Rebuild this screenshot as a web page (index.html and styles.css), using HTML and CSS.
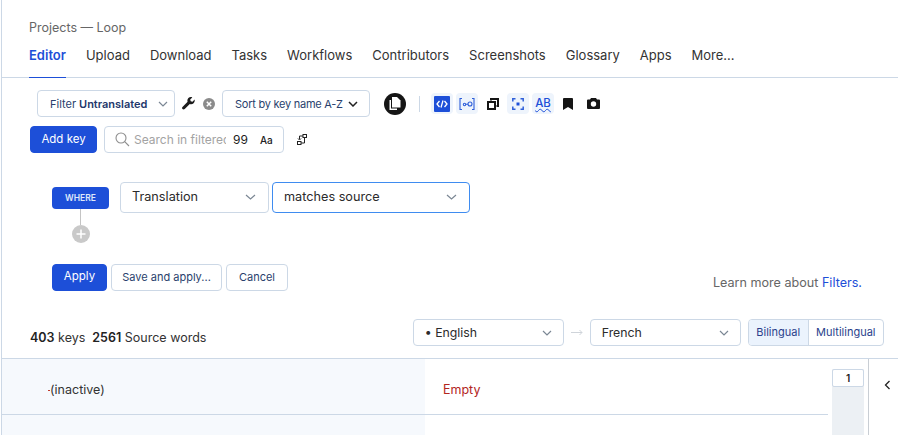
FILE: index.html
```html
<!DOCTYPE html>
<html lang="en">
<head>
  <meta charset="UTF-8" />
  <title>Editor</title>
  <link rel="stylesheet" href="styles.css">
</head>
<body>
  <div class="page">
    <div class="crumbs">Projects — Loop</div>
    <nav class="tabs">
      <a class="tab active">Editor</a>
      <a class="tab">Upload</a>
      <a class="tab">Download</a>
      <a class="tab">Tasks</a>
      <a class="tab">Workflows</a>
      <a class="tab">Contributors</a>
      <a class="tab">Screenshots</a>
      <a class="tab">Glossary</a>
      <a class="tab">Apps</a>
      <a class="tab">More...</a>
    </nav>

    <div class="toolbar">
      <button class="btn btn-filter">Filter <strong>Untranslated</strong>
        <svg class="chev" width="10" height="6" viewBox="0 0 10 6"><path d="M1 1l4 4 4-4"/></svg>
      </button>
      <svg class="wrench" width="13" height="13" viewBox="0 0 13 13"><path d="M12.6 2.6L10.5 4.700 8.700 4.200 8.200 2.400 10.300.4C8.900-.2 7.400.1 6.400 1.100 5.400 2.100 5.100 3.500 5.600 4.800L.5 9.900c-.6.6-.6 1.600 0 2.200.6.6 1.600.6 2.200 0l5.100-5.100c1.300.5 2.800.2 3.800-.8 1-1 1.300-2.400 1-3.600z"/></svg>
      <svg class="clear" width="12" height="12" viewBox="0 0 12 12"><circle cx="6" cy="6" r="6"/><path d="M3.800 3.800l4.400 4.400M8.200 3.800l-4.400 4.400"/></svg>
      <button class="btn btn-sort"><span class="sort-label">Sort by key name A-Z</span>
        <svg class="chev dark" width="10" height="6" viewBox="0 0 10 6"><path d="M1 1l4 4 4-4"/></svg>
      </button>
      <svg class="logo" width="22" height="22" viewBox="0 0 22 22"><circle cx="11" cy="11" r="11"/><path class="sheet" d="M5.500 7H7v8.500h6V17H5.500z"/><path class="sheet" d="M8 4h5l3.500 3.500V14.500H8z"/></svg>
      <span class="divider"></span>
      <div class="icons">
        <span class="ico tint"><svg width="16" height="16" viewBox="0 0 16 16"><rect class="solid" width="16" height="16" rx="1"/><path class="rev" d="M5.500 5L3 8l2.500 3M10.500 5L13 8l-2.500 3M9 4.500l-2 7"/></svg></span>
        <span class="ico tint"><svg width="16" height="14" viewBox="0 0 16 14"><path class="line" d="M3 1.500H1v11h2M13 1.500h2v11h-2"/><circle class="line" cx="11" cy="7" r="2"/><circle class="line" cx="5.500" cy="7.500" r="1.200"/><path class="line" d="M7 7.300h2"/></svg></span>
        <span class="ico wide"><svg width="12" height="12" viewBox="0 0 12 12"><path class="black" d="M3 0H12v9H9.500V7h.5V2H5v.5H3z"/><path class="black" d="M0 3h9v9H0zM2 5v5h5V5z" fill-rule="evenodd"/></svg></span>
        <span class="ico tint"><svg width="12" height="12" viewBox="0 0 12 12"><path class="line thick" d="M.8 3.500V.8h2.700M8.500.8h2.700v2.700M.8 8.500v2.700h2.700M8.500 11.200h2.700V8.500"/><rect class="solid" x="4.500" y="4.500" width="3" height="3"/></svg></span>
        <span class="ico tint"><span class="ab">AB</span></span>
        <span class="ico"><svg width="10" height="12" viewBox="0 0 10 12"><path class="black" d="M1 0h8a1 1 0 011 1v11L5 9l-5 3V1a1 1 0 011-1z"/></svg></span>
        <span class="ico"><svg width="13" height="11" viewBox="0 0 13 11"><path class="black" fill-rule="evenodd" d="M4 0h5l1 1.500h2a1 1 0 011 1V10a1 1 0 01-1 1H1a1 1 0 01-1-1V2.500a1 1 0 011-1h2zM6.500 3.300a2.700 2.700 0 100 5.400 2.700 2.700 0 000-5.400z"/></svg></span>
      </div>
    </div>

    <div class="toolbar second">
      <button class="btn btn-primary btn-add">Add key</button>
      <div class="search">
        <svg class="lens" width="15" height="15" viewBox="0 0 15 15"><circle cx="6" cy="6" r="5"/><path d="M9.700 9.700L14 14"/></svg>
        <input class="search-text" type="text" placeholder="Search in filtered keys">
        <span class="opt">99</span>
        <span class="opt small">Aa</span>
      </div>
      <svg class="grid-ico" width="10" height="11" viewBox="0 0 10 11"><rect x="6" y=".5" width="3.500" height="3"/><rect x=".5" y="7.500" width="3.500" height="3"/><path d="M6 2H2.500v3M1 4.500l1.500 1.500L4 4.500M7.500 4v5H4"/></svg>
    </div>

    <div class="where">
      <div class="where-left">
        <span class="where-tag">WHERE</span>
        <span class="where-line"></span>
        <svg class="plus" width="18" height="18" viewBox="0 0 18 18"><circle cx="9" cy="9" r="9"/><path d="M9 4.500v9M4.500 9h9"/></svg>
      </div>
      <div class="select field-a">Translation
        <svg class="chev" width="11" height="6" viewBox="0 0 11 6"><path d="M1 1l4.500 4L10 1"/></svg>
      </div>
      <div class="select field-b">matches source
        <svg class="chev" width="11" height="6" viewBox="0 0 11 6"><path d="M1 1l4.500 4L10 1"/></svg>
      </div>
    </div>

    <div class="actions">
      <button class="btn btn-primary btn-apply">Apply</button>
      <button class="btn btn-save">Save and apply...</button>
      <button class="btn btn-cancel">Cancel</button>
      <span class="learn">Learn more about <a>Filters.</a></span>
    </div>

    <div class="stats">
      <span class="counts"><b>403</b> keys&nbsp; <b>2561</b> Source words</span>
      <div class="lang-pick">
        <div class="select lang">• English
          <svg class="chev" width="10" height="6" viewBox="0 0 10 6"><path d="M1 1l4 4 4-4"/></svg>
        </div>
        <svg class="arrow" width="12" height="7" viewBox="0 0 12 7"><path d="M0 3.500h11M8.500 1l2.500 2.500L8.500 6"/></svg>
        <div class="select lang">French
          <svg class="chev" width="10" height="6" viewBox="0 0 10 6"><path d="M1 1l4 4 4-4"/></svg>
        </div>
        <div class="mode">
          <span class="mode-item on">Bilingual</span>
          <span class="mode-item">Multilingual</span>
        </div>
      </div>
    </div>

    <div class="table">
      <div class="rows">
        <div class="row">
          <div class="cell source"><i class="dot"></i>(inactive)</div>
          <div class="cell target">Empty</div>
        </div>
        <div class="row">
          <div class="cell source"></div>
          <div class="cell target"></div>
        </div>
      </div>
      <div class="pager"><span class="page-num">1</span></div>
      <div class="side">
        <svg width="7" height="10" viewBox="0 0 7 10"><path d="M5.500 1L1.500 5l4 4"/></svg>
      </div>
    </div>
  </div>
</body>
</html>
```

FILE: styles.css
```css
* {
  box-sizing: border-box;
}

html, body {
  margin: 0;
  height: 100%;
  overflow: hidden;
}

body {
  background: #fff;
  color: #2b2b2b;
  font-family: 'Inter', sans-serif;
  font-size: 13px;
}

button {
  font-family: inherit;
}

svg {
  display: block;
  flex: none;
}

.page {
  margin-left: 1px;
  width: 897px;
  height: 435px;
  border-left: 1px solid #ccd8e6;
  overflow: hidden;
}

.crumbs {
  padding: 20px 0 0 27px;
  height: 38px;
  font-size: 12.5px;
  line-height: 16px;
  color: #666;
}

.tabs {
  display: flex;
  gap: 20px;
  height: 40px;
  padding-left: 27px;
  border-bottom: 1px solid #ccd8e6;
}

.tab {
  height: 40px;
  padding-top: 8px;
  line-height: 18px;
  font-size: 13px;
  color: #333;
}

.tab.active {
  color: #1d4fd8;
  font-weight: 600;
  border-bottom: 1px solid #1d4fd8;
}

.toolbar {
  display: flex;
  align-items: center;
  height: 27px;
  margin-top: 12px;
  padding-left: 35px;
}

.toolbar.second {
  margin-top: 9px;
  padding-left: 28px;
}

.btn {
  height: 27px;
  padding: 0;
  background: #fff;
  border: 1px solid #ccd8e6;
  border-radius: 4px;
  font-size: 11px;
  white-space: nowrap;
  color: #2a3f6d;
}

.btn-primary {
  background: #1d4fd8;
  border-color: #1d4fd8;
  color: #fff;
  font-size: 11.5px;
  font-weight: 400;
}

.btn-filter {
  display: flex;
  align-items: center;
  width: 138px;
  padding-left: 12px;
  gap: 3px;
}

.btn-filter strong {
  font-weight: 600;
  color: #22376b;
}

.btn-filter .chev {
  margin-left: 8px;
}

.chev path {
  fill: none;
  stroke: #7b8794;
  stroke-width: 1.2;
}

.chev.dark path {
  stroke: #222;
  stroke-width: 1.5;
}

.wrench {
  margin-left: 7px;
}

.wrench path {
  fill: #1c1c1c;
}

.clear {
  margin-left: 8px;
}

.clear circle {
  fill: #8b8b8b;
}

.clear path {
  stroke: #fff;
  stroke-width: 1.5;
}

.btn-sort {
  display: flex;
  align-items: center;
  justify-content: space-between;
  width: 148px;
  margin-left: 7px;
  padding: 0 11px 0 12px;
}

.sort-label {
  letter-spacing: -0.25px;
}

.logo {
  margin-left: 14px;
}

.logo circle {
  fill: #151515;
}

.logo .sheet {
  fill: #fff;
}

.divider {
  width: 1px;
  height: 16px;
  margin: 0 11px 0 13px;
  background: #ccd8e6;
}

.icons {
  display: flex;
  align-items: center;
  gap: 3px;
}

.ico {
  display: flex;
  align-items: center;
  justify-content: center;
  width: 22px;
  height: 21px;
}

.ico.wide {
  width: 23px;
}

.ico.tint {
  background: #eef4fc;
  border-radius: 4px;
}

.ico .solid {
  fill: #1d4fd8;
}

.ico .rev {
  fill: none;
  stroke: #fff;
  stroke-width: 1.3;
}

.ico .line {
  fill: none;
  stroke: #2f5fd9;
  stroke-width: 1.1;
}

.ico .thick {
  stroke-width: 1.5;
}

.ico .black {
  fill: #151515;
}

.ab {
  font-size: 11.5px;
  font-weight: 500;
  line-height: 13px;
  color: #1d4fd8;
  text-decoration: underline wavy 1px;
  text-underline-offset: 1px;
}

.btn-add {
  width: 67px;
  padding-bottom: 1px;
}

.search {
  display: flex;
  align-items: center;
  width: 180px;
  height: 27px;
  margin-left: 7px;
  padding-left: 10px;
  background: #fff;
  border: 1px solid #ccd8e6;
  border-radius: 4px;
}

.lens {
  margin-right: 4px;
}

.lens circle, .lens path {
  fill: none;
  stroke: #8e8e8e;
  stroke-width: 1.1;
}

.search-text {
  width: 92px;
  padding: 0;
  border: 0;
  outline: 0;
  font-family: inherit;
  font-size: 12px;
}

.search-text::placeholder {
  color: #a3a3a3;
}

.opt {
  margin-left: 7px;
  font-size: 12px;
  color: #222;
}

.opt.small {
  margin-left: 12px;
  font-size: 10px;
  font-weight: 500;
}

.grid-ico {
  margin-left: 13px;
}

.grid-ico rect, .grid-ico path {
  fill: none;
  stroke: #222;
  stroke-width: 1;
}

.where {
  display: flex;
  align-items: flex-start;
  height: 82px;
  margin-top: 29px;
  padding-left: 50px;
}

.where-left {
  display: flex;
  flex-direction: column;
  align-items: center;
  width: 57px;
  margin-right: 11px;
  padding-top: 5px;
}

.where-tag {
  width: 57px;
  height: 22px;
  background: #1d4fd8;
  border-radius: 4px;
  font-size: 8.5px;
  font-weight: 600;
  line-height: 22px;
  text-align: center;
  color: #dfe8fb;
}

.where-line {
  width: 1px;
  height: 16px;
  background: #c4c4c4;
}

.plus circle {
  fill: #c9c9c9;
}

.plus path {
  stroke: #fff;
  stroke-width: 1.5;
}

.select {
  display: flex;
  align-items: center;
  justify-content: space-between;
  background: #fff;
  border: 1px solid #ccd8e6;
  border-radius: 4px;
  color: #2b2b2b;
}

.field-a, .field-b {
  height: 31px;
  padding: 0 12px 2px 11px;
  font-size: 12.7px;
}

.field-a {
  width: 149px;
}

.field-b {
  width: 198px;
  margin-left: 3px;
  border-color: #3f8cf0;
}

.actions {
  display: flex;
  align-items: center;
  height: 27px;
  padding-left: 50px;
}

.btn-apply {
  width: 55px;
  padding-bottom: 3px;
}

.btn-save {
  width: 111px;
  margin-left: 4px;
  padding-bottom: 2px;
}

.btn-cancel {
  width: 62px;
  margin-left: 4px;
  padding-bottom: 2px;
}

.learn {
  margin-left: auto;
  padding: 10px 36px 0 0;
  font-size: 12.6px;
  color: #666;
}

.learn a {
  color: #1d4fd8;
}

.stats {
  display: flex;
  align-items: center;
  height: 27px;
  margin-top: 28px;
  padding-left: 28px;
}

.counts {
  padding-top: 9px;
  font-size: 12.5px;
  color: #333;
}

.counts b {
  font-weight: 600;
  color: #222;
}

.lang-pick {
  display: flex;
  align-items: center;
  margin-left: auto;
  padding-right: 14px;
}

.lang {
  width: 151px;
  height: 27px;
  padding: 0 11px;
  font-size: 12.3px;
}

.arrow {
  margin: 0 7px 0 7px;
}

.arrow path {
  fill: none;
  stroke: #cfd4da;
}

.mode {
  display: flex;
  height: 27px;
  margin-left: 7px;
  border: 1px solid #ccd8e6;
  border-radius: 4px;
  overflow: hidden;
}

.mode-item {
  padding: 0 7.5px;
  font-size: 11px;
  line-height: 24px;
  color: #2a3f8c;
}

.mode-item.on {
  background: #ebf3fd;
  border-right: 1px solid #ccd8e6;
}

.table {
  display: flex;
  height: 77px;
  margin-top: 12px;
  border-top: 1px solid #ccd8e6;
}

.rows {
  width: 826px;
}

.row {
  display: flex;
  height: 56px;
  border-bottom: 1px solid #ccd8e6;
}

.row + .row {
  border-bottom: 0;
}

.cell {
  padding-top: 23px;
  line-height: 16px;
  font-size: 12.5px;
}

.source {
  width: 423px;
  padding-left: 46px;
  background: #f6f9fd;
  color: #333;
}

.target {
  padding-left: 18px;
  color: #b3261e;
}

.dot {
  display: inline-block;
  width: 2px;
  height: 1px;
  margin-bottom: 3px;
  background: #c0392b;
}

.pager {
  width: 32px;
  height: 100%;
  margin: 10px 0 0 4px;
  background: #ecf0f4;
}

.page-num {
  display: block;
  height: 18px;
  background: #fff;
  border: 1px solid #ccd8e6;
  border-radius: 2px;
  font-size: 10px;
  font-weight: 600;
  line-height: 16px;
  text-align: center;
  color: #222;
}

.side {
  width: 29px;
  margin-left: 4px;
  padding: 21px 0 0 15px;
  border-left: 1px solid #c9ced4;
}

.side path {
  fill: none;
  stroke: #222;
  stroke-width: 1.3;
}
```
